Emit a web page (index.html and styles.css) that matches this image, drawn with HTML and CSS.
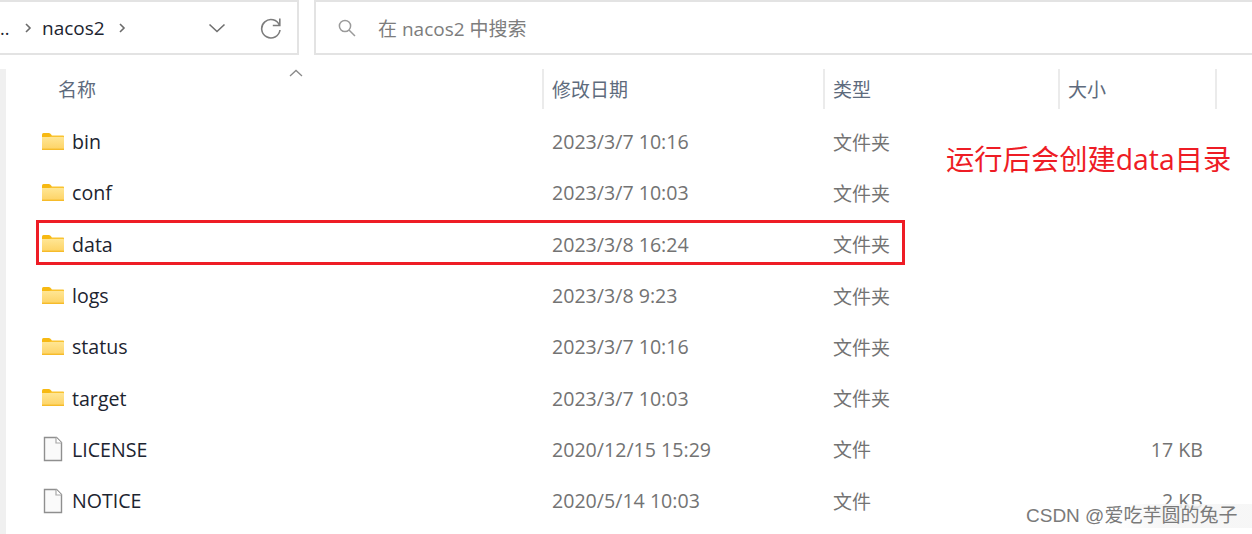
FILE: index.html
```html
<!DOCTYPE html>
<html lang="zh-CN">

<head>
  <meta charset="UTF-8">
  <meta name="viewport" content="width=device-width, initial-scale=1.0">
  <title>nacos2</title>
  <link rel="stylesheet" href="styles.css">
</head>

<body>
  <div class="toolbar">
    <div class="address">
      <span class="crumb-more">..</span>
      <svg class="chev" width="8" height="12" viewBox="0 0 8 12"><path d="M2 2l4 4-4 4" /></svg>
      <span class="crumb">nacos2</span>
      <svg class="chev" width="8" height="12" viewBox="0 0 8 12"><path d="M2 2l4 4-4 4" /></svg>
      <svg class="drop" width="18" height="10" viewBox="0 0 18 10"><path d="M1.5 1.5L9 8.5l7.5-7" /></svg>
      <svg class="refresh" width="24" height="24" viewBox="0 0 24 24"><path d="M20.5 9.5A9.2 9.2 0 1 0 21 14" /><path d="M20.8 2.5v7h-7" /></svg>
    </div>
    <div class="search">
      <svg class="lens" width="20" height="20" viewBox="0 0 20 20"><circle cx="8" cy="8" r="5.6" /><path d="M12 12l6 6" /></svg>
      <span>在 nacos2 中搜索</span>
    </div>
  </div>

  <div class="list">
    <div class="head">
      <div class="col-name">名称</div>
      <div class="col">修改日期</div>
      <div class="col">类型</div>
      <div class="col">大小</div>
      <div class="col-end"></div>
      <svg class="sort" width="14" height="8" viewBox="0 0 14 8"><path d="M1 7l6-5.5L13 7" /></svg>
    </div>

    <div class="row">
      <div class="name"><svg class="icon" width="24" height="20" viewBox="0 0 24 20"><use href="#folder" /></svg>bin</div>
      <div>2023/3/7 10:16</div>
      <div class="kind">文件夹</div>
      <div></div>
    </div>
    <div class="row">
      <div class="name"><svg class="icon" width="24" height="20" viewBox="0 0 24 20"><use href="#folder" /></svg>conf</div>
      <div>2023/3/7 10:03</div>
      <div class="kind">文件夹</div>
      <div></div>
    </div>
    <div class="row">
      <div class="name"><svg class="icon" width="24" height="20" viewBox="0 0 24 20"><use href="#folder" /></svg>data</div>
      <div>2023/3/8 16:24</div>
      <div class="kind">文件夹</div>
      <div></div>
    </div>
    <div class="row">
      <div class="name"><svg class="icon" width="24" height="20" viewBox="0 0 24 20"><use href="#folder" /></svg>logs</div>
      <div>2023/3/8 9:23</div>
      <div class="kind">文件夹</div>
      <div></div>
    </div>
    <div class="row">
      <div class="name"><svg class="icon" width="24" height="20" viewBox="0 0 24 20"><use href="#folder" /></svg>status</div>
      <div>2023/3/7 10:16</div>
      <div class="kind">文件夹</div>
      <div></div>
    </div>
    <div class="row">
      <div class="name"><svg class="icon" width="24" height="20" viewBox="0 0 24 20"><use href="#folder" /></svg>target</div>
      <div>2023/3/7 10:03</div>
      <div class="kind">文件夹</div>
      <div></div>
    </div>
    <div class="row">
      <div class="name"><svg class="icon" width="24" height="26" viewBox="0 0 24 26"><use href="#file" /></svg>LICENSE</div>
      <div>2020/12/15 15:29</div>
      <div class="kind">文件</div>
      <div class="size">17 KB</div>
    </div>
    <div class="row">
      <div class="name"><svg class="icon" width="24" height="26" viewBox="0 0 24 26"><use href="#file" /></svg>NOTICE</div>
      <div>2020/5/14 10:03</div>
      <div class="kind">文件</div>
      <div class="size">2 KB</div>
    </div>
  </div>

  <!-- annotation on top of the screenshot -->
  <div class="mark"></div>
  <div class="note">运行后会创建data目录</div>
  <div class="watermark">CSDN @爱吃芋圆的兔子</div>

  <svg class="defs" width="0" height="0">
    <defs>
      <linearGradient id="folder-fill" x1="0" y1="0" x2="0" y2="1">
        <stop offset="0" stop-color="#ffe694" />
        <stop offset="1" stop-color="#fdd263" />
      </linearGradient>
      <symbol id="folder" viewBox="0 0 24 20">
        <path d="M1 2.5q0-1.5 1.5-1.5h5.3q.8 0 1.4.6L11 3.5v2H1z" fill="#f7b912" />
        <path d="M8 5L11 3.5h11.2q.8 0 .8.8V6H8z" fill="#f9c331" />
        <rect x="1" y="5" width="22" height="13" rx=".6" fill="url(#folder-fill)" />
        <rect x="1" y="16.6" width="22" height="1.4" fill="#f6bb2a" />
      </symbol>
      <symbol id="file" viewBox="0 0 24 26">
        <path d="M3.5 1.5h12l5 5v18h-17z" fill="#fafafa" stroke="#8f8f8f" stroke-width="1.4" />
        <path d="M15 1.5v5.5h5.5" fill="#fff" stroke="#a8a8a8" stroke-width="1.2" />
      </symbol>
    </defs>
  </svg>
</body>

</html>
```

FILE: styles.css
```css
* {
  margin: 0;
  padding: 0;
  box-sizing: border-box;
}

body {
  font-family: "Open Sans", "Noto Sans CJK SC", sans-serif;
  background-color: #fff;
  height: 534px;
  overflow: hidden;
  position: relative;
  color: #1c2430;
}

.chev,
.drop,
.refresh,
.lens,
.sort {
  fill: none;
}

.defs {
  position: absolute;
}

.toolbar {
  display: flex;
  gap: 15px;
  height: 55px;
  margin-left: -4px;
}

.address,
.search {
  display: flex;
  align-items: center;
  border: 2px solid #e3e3e3;
  height: 55px;
}

.address {
  width: 303px;
  padding-left: 2px;
}

.search {
  flex: 1;
  margin-right: -4px;
  padding-left: 21px;
  color: #7d7d7d;
  font-size: 19px;
}

.crumb-more {
  font-size: 18px;
  width: 24px;
}

.crumb {
  font-size: 19px;
  margin: 0 13px 0 10px;
}

.chev path {
  stroke: #6b6b6b;
  stroke-width: 1.6;
}

.drop {
  margin-left: 82px;
}

.drop path {
  stroke: #6f6f6f;
  stroke-width: 1.6;
}

.refresh {
  margin-left: 33px;
}

.refresh path {
  stroke: #7c7c7c;
  stroke-width: 1.6;
}

.lens {
  margin-right: 21px;
}

.lens circle,
.lens path {
  stroke: #9a9a9a;
  stroke-width: 1.5;
}

.list {
  margin-top: 14px;
  height: 465px;
  border-left: 6px solid #f0f0f0;
}

.head {
  display: grid;
  grid-template-columns: 536px 281px 235px 157px 1fr;
  height: 40px;
  position: relative;
  color: #5e6b7d;
  font-size: 19px;
  margin-bottom: 7px;
}

.col-name {
  padding: 6px 0 0 52px;
}

.col,
.col-end {
  border-left: 2px solid #ebebeb;
  padding: 6px 0 0 8px;
}

.sort {
  position: absolute;
  left: 283px;
  top: 0;
}

.sort path {
  stroke: #8a8a8a;
  stroke-width: 1.3;
}

.row {
  display: grid;
  grid-template-columns: 546px 281px 235px 157px;
  align-items: center;
  height: 51.3px;
  font-size: 19.6px;
  color: #737373;
}

.kind {
  font-size: 19px;
}

.name {
  display: flex;
  align-items: center;
  gap: 7px;
  padding-left: 35px;
  color: #1c2430;
}

.size {
  text-align: right;
  padding-right: 22px;
}

.mark {
  position: absolute;
  left: 36px;
  top: 220px;
  width: 869px;
  height: 45px;
  border: 3px solid #ee1c25;
}

.note {
  position: absolute;
  left: 946px;
  top: 140px;
  color: #ee1c25;
  font-size: 28.3px;
  line-height: 38px;
  white-space: nowrap;
}

.watermark {
  position: absolute;
  left: 1026px;
  right: 0;
  top: 504px;
  color: #7a7a7a;
  font-size: 19px;
  line-height: 24px;
  font-family: "Liberation Sans", "Noto Sans CJK SC", sans-serif;
  white-space: nowrap;
  background: linear-gradient(to right, rgba(245, 245, 245, 0) 40%, rgba(245, 245, 245, 0.85) 60%);
}
```
